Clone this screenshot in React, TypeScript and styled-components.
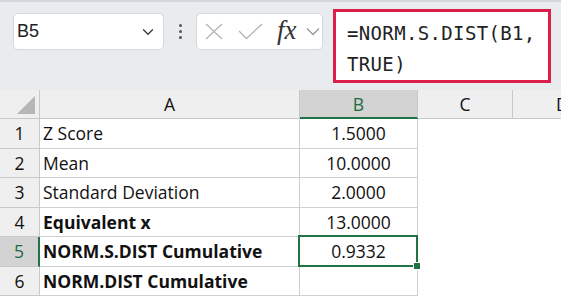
import * as React from 'react';
import styled, {createGlobalStyle} from 'styled-components';
import {ChevronDown} from 'lucide-react';

const rows = [
    {label: 'Z Score', value: '1.5000', bold: false},
    {label: 'Mean', value: '10.0000', bold: false},
    {label: 'Standard Deviation', value: '2.0000', bold: false},
    {label: 'Equivalent x', value: '13.0000', bold: true},
    {label: 'NORM.S.DIST Cumulative', value: '0.9332', bold: true},
    {label: 'NORM.DIST Cumulative', value: '', bold: true},
];
const activeRow = 5;

export default function App() {
    return (
        <Page>
            <GlobalStyle />
            <Toolbar>
                <NameBox>
                    <span>B5</span>
                    <ChevronDown size={18} strokeWidth={1.6} color="#333" />
                </NameBox>
                <Dots><i /><i /><i /></Dots>
                <FxBox>
                    <svg width="18" height="17" viewBox="0 0 18 17">
                        <path d="M1 1 L17 16 M17 1 L1 16" stroke="#b4b4b4" strokeWidth="1.3" fill="none" />
                    </svg>
                    <svg width="25" height="17" viewBox="0 0 25 17">
                        <path d="M1 8 L8.5 15.5 L24 1" stroke="#b4b4b4" strokeWidth="1.3" fill="none" />
                    </svg>
                    <Fx>fx</Fx>
                    <svg width="14" height="9" viewBox="0 0 14 9">
                        <path d="M1 1.5 L7 7.5 L13 1.5" stroke="#9a9a9a" strokeWidth="1.3" fill="none" />
                    </svg>
                </FxBox>
                <FormulaBox>=NORM.S.DIST(B1,<br />TRUE)</FormulaBox>
            </Toolbar>
            <Sheet>
                <Corner><Tri /></Corner>
                <ColHead>A</ColHead>
                <ColHead $active>B</ColHead>
                <ColHead>C</ColHead>
                <ColHead $last>D</ColHead>
                {rows.map((r, i) => (
                    <React.Fragment key={i}>
                        <RowHead $active={i + 1 === activeRow}>{i + 1}</RowHead>
                        <Cell $bold={r.bold}>{r.label}</Cell>
                        <Cell $num $selected={i + 1 === activeRow}>{r.value}</Cell>
                        <Blank />
                        <Blank />
                    </React.Fragment>
                ))}
            </Sheet>
        </Page>
    );
}

const GlobalStyle = createGlobalStyle`
    body{
        margin: 0;
        background: #fff;
        font-family: "Open Sans", "Noto Sans", sans-serif;
        overflow: hidden;
    }
`;

const Page = styled.div`
    width: 561px;
    height: 298px;
    overflow: hidden;
`;

const Toolbar = styled.div`
    height: 90px;
    box-sizing: border-box;
    background: #e9ecef;
    border-top: 2px solid #d3d6da;
    display: flex;
    align-items: flex-start;
    padding: 11px 0 0 13px;
`;

const NameBox = styled.div`
    width: 151px;
    height: 37px;
    box-sizing: border-box;
    background: #fff;
    border: 1px solid #d6d8db;
    border-radius: 5px;
    display: flex;
    align-items: center;
    justify-content: space-between;
    padding: 0 6px 0 3px;
    font-family: "Liberation Sans", sans-serif;
    font-size: 18px;
    color: #222;
`;

const Dots = styled.div`
    width: 32px;
    height: 37px;
    display: flex;
    flex-direction: column;
    align-items: center;
    justify-content: center;
    gap: 3px;
    i{
        width: 3px;
        height: 3px;
        border-radius: 50%;
        background: #555;
    }
`;

const FxBox = styled.div`
    width: 127px;
    height: 37px;
    box-sizing: border-box;
    background: #fff;
    border: 1px solid #d6d8db;
    border-radius: 5px;
    display: flex;
    align-items: center;
    padding: 0 0 0 8px;
    gap: 15px;
`;

const Fx = styled.span`
    font-family: "Liberation Serif", serif;
    font-style: italic;
    font-size: 27px;
    line-height: 1;
    color: #333;
    margin: -3px -6px 0 -1px;
`;

const FormulaBox = styled.div`
    margin: -4px 0 0 10px;
    width: 218px;
    height: 74px;
    box-sizing: border-box;
    background: #fff;
    border: 3px solid #dc1e4b;
    padding: 6px 0 0 11px;
    font-family: "DejaVu Sans Mono", monospace;
    font-size: 19px;
    letter-spacing: 0.35px;
    line-height: 31px;
    color: #222;
`;

const Sheet = styled.div`
    display: grid;
    grid-template-columns: 40px 260px 118px 95px 48px;
    grid-template-rows: 29px repeat(6, 29.5px);
    font-size: 17.5px;
    color: #111;
`;

const HeadBase = styled.div`
    background: #efefef;
    box-sizing: border-box;
    display: flex;
    align-items: center;
    justify-content: center;
`;

const Corner = styled(HeadBase)`
    position: relative;
    border-right: 1px solid #c8c8c8;
    border-bottom: 1px solid #c8c8c8;
`;

const Tri = styled.div`
    position: absolute;
    right: 4px;
    bottom: 4px;
    width: 0;
    height: 0;
    border-left: 18px solid transparent;
    border-bottom: 18px solid #b6b6b6;
`;

const ColHead = styled(HeadBase)<{$active?: boolean; $last?: boolean}>`
    background: ${p => p.$active ? '#d3d3d3' : '#efefef'};
    color: ${p => p.$active ? '#1e6b41' : '#111'};
    border-right: ${p => p.$last ? 'none' : '1px solid #c8c8c8'};
    border-bottom: ${p => p.$active ? '2px solid #217346' : '1px solid #c8c8c8'};
    justify-content: ${p => p.$last ? 'flex-start' : 'center'};
    padding-left: ${p => p.$last ? '43px' : '0'};
`;

const RowHead = styled(HeadBase)<{$active?: boolean}>`
    background: ${p => p.$active ? '#d3d3d3' : '#efefef'};
    color: ${p => p.$active ? '#1e6b41' : '#111'};
    border-bottom: 1px solid #c8c8c8;
    border-right: ${p => p.$active ? '2px solid #217346' : '1px solid #c8c8c8'};
`;

const Cell = styled.div<{$bold?: boolean; $num?: boolean; $selected?: boolean}>`
    box-sizing: border-box;
    border-right: 1px solid #cfcfcf;
    border-bottom: 1px solid #cfcfcf;
    display: flex;
    align-items: center;
    justify-content: ${p => p.$num ? 'center' : 'flex-start'};
    padding-left: ${p => p.$num ? '0' : '3px'};
    font-weight: ${p => p.$bold ? 700 : 400};
    position: relative;
    ${p => p.$selected && `
        &::after{
            content: '';
            position: absolute;
            left: -2px;
            top: -2px;
            right: -1px;
            bottom: -1px;
            border: 2px solid #217346;
        }
        &::before{
            content: '';
            position: absolute;
            right: -4px;
            bottom: -4px;
            width: 6px;
            height: 6px;
            background: #217346;
            border: 1px solid #fff;
            z-index: 1;
        }
    `}
`;

const Blank = styled.div`
    background: #fff;
`;
